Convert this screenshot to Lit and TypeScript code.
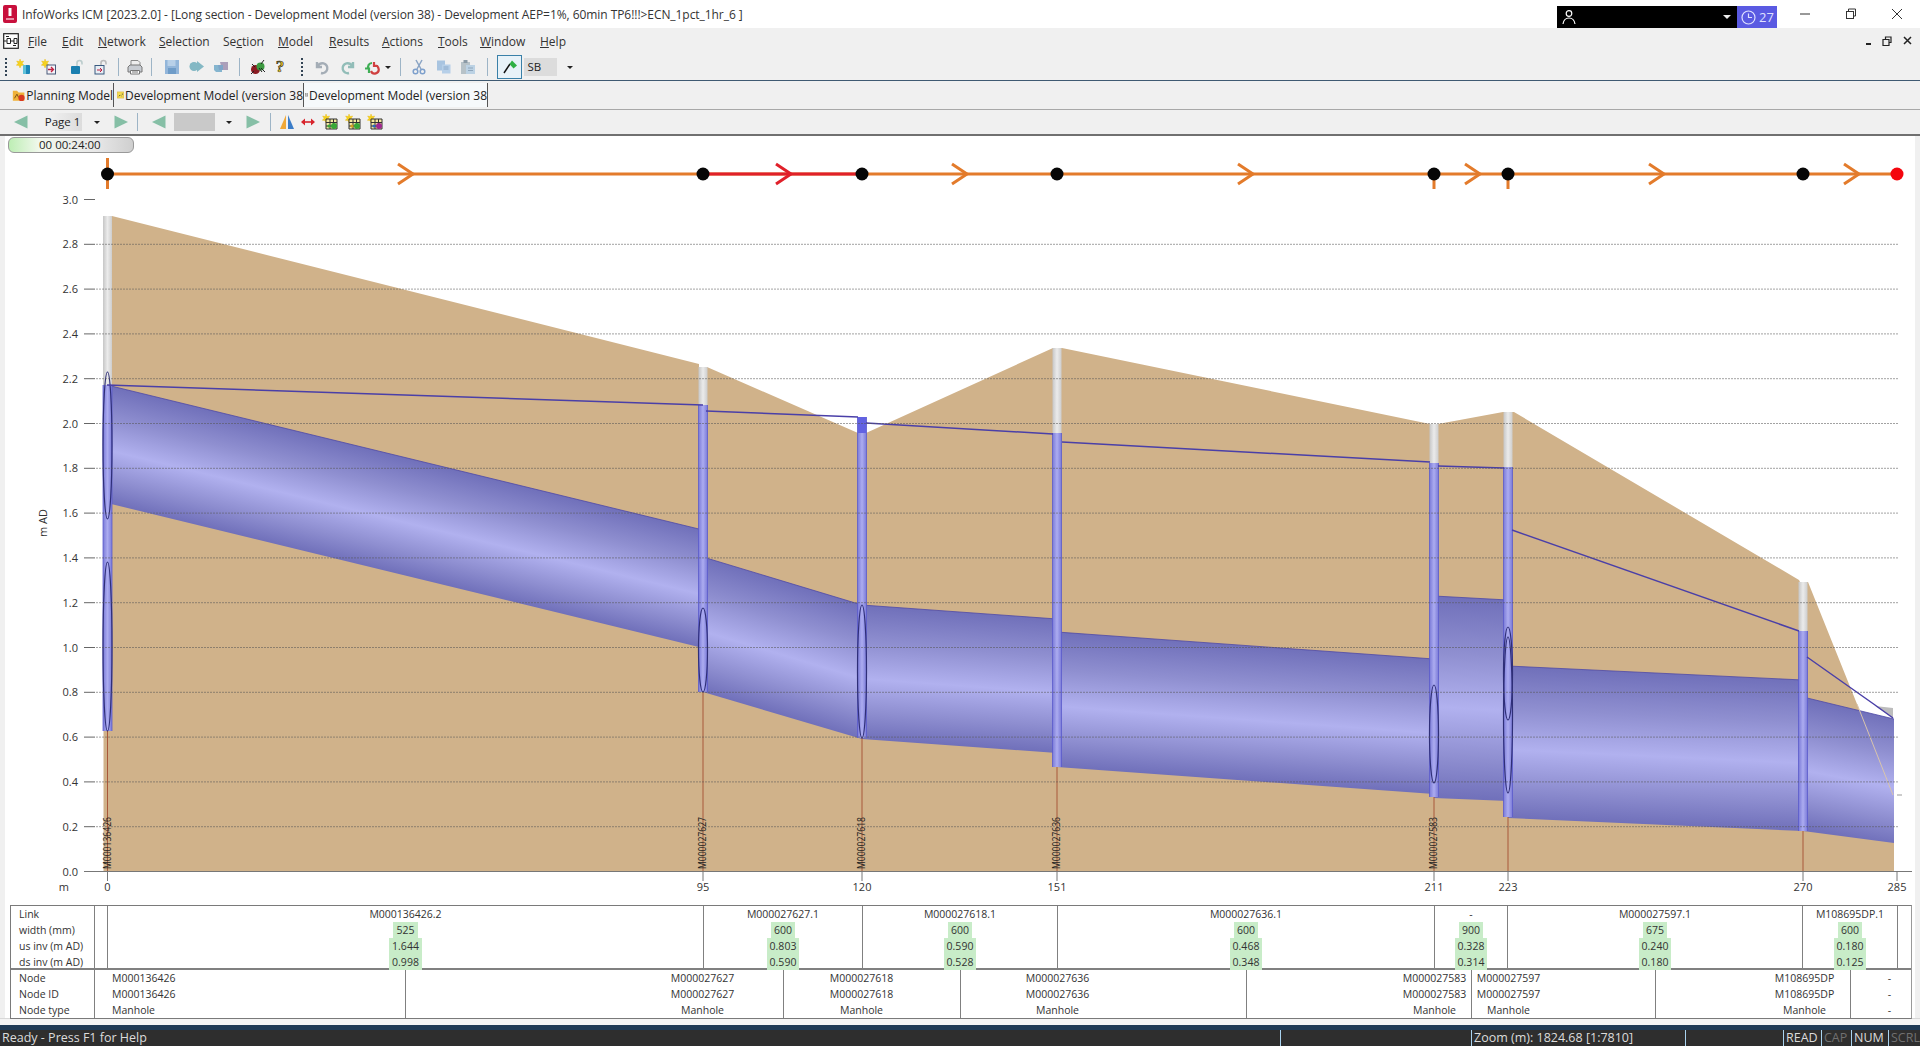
import { LitElement, css, html, svg } from 'lit'
import { customElement } from 'lit/decorators.js'

const UI = `"Open Sans", "Noto Sans", sans-serif`
const Y = (v: number) => 871.5 - 224 * v

// long section data, in page pixels
const NODES = [
  { x: 107.5, km: '0', ground: 216, water: 385, bottom: 731, label: 'M000136426' },
  { x: 703, km: '95', ground: 367, water: 405, bottom: 692, label: 'M000027627' },
  { x: 862, km: '120', ground: 433, water: 417, bottom: 738, label: 'M000027618' },
  { x: 1057, km: '151', ground: 348, water: 433, bottom: 767, label: 'M000027636' },
  { x: 1434, km: '211', ground: 424, water: 463, bottom: 797, label: 'M000027583' },
  { x: 1508, km: '223', ground: 412, water: 467, bottom: 817, label: '' },
  { x: 1803, km: '270', ground: 582, water: 631, bottom: 831, label: '' },
]

const PIPES: number[][][] = [
  [[107, 385], [703, 530], [703, 648], [107, 503]],
  [[703, 557], [862, 605], [862, 739], [703, 692]],
  [[862, 605], [1057, 619], [1057, 753], [862, 739]],
  [[1057, 632], [1434, 659], [1434, 794], [1057, 767]],
  [[1434, 596], [1508, 600], [1508, 801], [1434, 798]],
  [[1508, 666], [1803, 680], [1803, 831], [1508, 818]],
  [[1803, 697], [1894, 719], [1894, 843], [1803, 831]],
]

const WATER = [
  '107,385 703,405',
  '706,411 858,417',
  '866,423 1053,434',
  '1062,442 1430,462',
  '1438,466 1504,468',
  '1512,530 1799,631',
  '1807,657 1875,705 1893,718',
]

const ELLIPSES = [
  [107.5, 372, 519], [107.5, 562, 731], [703, 608, 692], [862, 605, 738],
  [1434, 685, 783], [1508, 627, 720], [1508, 637, 793],
]

const ARROWS = [
  [413, '#e37b2b'], [791, '#e0202a'], [967, '#e37b2b'], [1253, '#e37b2b'],
  [1480, '#e37b2b'], [1664, '#e37b2b'], [1859, '#e37b2b'],
] as [number, string][]

const LINKS = [
  { w: 13 },
  { w: 596, name: 'M000136426.2', vals: ['525', '1.644', '0.998'] },
  { w: 159, name: 'M000027627.1', vals: ['600', '0.803', '0.590'] },
  { w: 195, name: 'M000027618.1', vals: ['600', '0.590', '0.528'] },
  { w: 377, name: 'M000027636.1', vals: ['600', '0.468', '0.348'] },
  { w: 73, name: '-', vals: ['900', '0.328', '0.314'] },
  { w: 295, name: 'M000027597.1', vals: ['675', '0.240', '0.180'] },
  { w: 95, name: 'M108695DP.1', vals: ['600', '0.180', '0.125'] },
  { w: 15 },
]

const NODE_CELLS = [
  { from: 94, to: 405, c: 144, id: 'M000136426', type: 'Manhole', left: true },
  { from: 405, to: 783, c: 702, id: 'M000027627', type: 'Manhole' },
  { from: 783, to: 960, c: 861, id: 'M000027618', type: 'Manhole' },
  { from: 960, to: 1246, c: 1057, id: 'M000027636', type: 'Manhole' },
  { from: 1246, to: 1471, c: 1434, id: 'M000027583', type: 'Manhole' },
  { from: 1471, to: 1655, c: 1508, id: 'M000027597', type: 'Manhole' },
  { from: 1655, to: 1850, c: 1804, id: 'M108695DP', type: 'Manhole' },
  { from: 1850, to: 1912, c: 1889, id: '-', type: '-' },
]

const STATUS = [
  { w: 1280, t: 'Ready - Press F1 for Help' },
  { w: 191, t: '' },
  { w: 214, t: 'Zoom (m): 1824.68 [1:7810]' },
  { w: 98, t: '' },
  { w: 38, t: 'READ' },
  { w: 30, t: 'CAP', off: true },
  { w: 37, t: 'NUM' },
  { w: 32, t: 'SCRL', off: true },
]

const star = svg`<path d="M4 0l1 2.6 2.7-.6-1.5 2.3 1.8 2-2.7.1L4 9 3 6.400.3 6.300l1.800-2L.6 2l2.700.6z" fill="#f6d21e" stroke="#e8b810" stroke-width=".4"/>`
const ic = (body: unknown, size = 16) =>
  html`<svg width=${size} height=${size} viewBox="0 0 16 16">${body}</svg>`
const netIcon = () => ic(svg`<rect x=".7" y=".7" width="14.600" height="14.600" fill="#fff" stroke="#222" stroke-width="1.200"/><path d="M.7 8h3M4 5.500h3.500v5H4zM7.500 8H11M11 5.500h3v5h-3zM3 3.500h3M10 12.500h3" fill="none" stroke="#222" stroke-width="1"/>`)
const gridIcon = (c1: string, c2: string) => ic(svg`${star}<path d="M4 5h11v10H4z" fill="#f4e8a0" stroke="#333" stroke-width="1"/><path d="M4 8.500h11M4 12h11M8 5v10M11.500 5v10" stroke="#333" stroke-width="1"/><circle cx="12" cy="12" r="3" fill=${c1}/><circle cx="7" cy="12" r="1.600" fill=${c2}/>`)
const tri = (right: boolean) => ic(right
  ? svg`<path d="M1.500 1.500L15 8 1.500 14.500z" fill="#86bfa6"/>`
  : svg`<path d="M14.500 1.500L1 8l13.500 6.500z" fill="#86bfa6"/>`)
const drop = html`<span class="drop"></span>`
const sep = html`<span class="sep"></span>`
const grip = html`<span class="grip"></span>`

const MAIN_TOOLS: [number, unknown][] = [
  [4, grip],
  [21, ic(svg`${star}<rect x="7" y="6" width="7" height="9" rx="1" fill="#1c87b8"/><rect x="7" y="6" width="3" height="9" fill="#5fc0d8"/>`)],
  [50, ic(svg`${star}<rect x="6" y="6" width="8.500" height="9" fill="#f4f4f8" stroke="#4a5a7a"/><path d="M7 10.500h5M10 8l2.500 2.500L10 13" fill="none" stroke="#c02040" stroke-width="1.300"/>`)],
  [76, ic(svg`<path d="M9 7V4a2.500 2.500 0 0 1 5 0v1.500" fill="none" stroke="#bcc" stroke-width="1.600"/><rect x="3" y="7" width="9" height="8" rx="1" fill="#1a7fb0"/>`)],
  [103, ic(svg`<path d="M9 6V4a2.500 2.500 0 0 1 5 0v1.500" fill="none" stroke="#bbb" stroke-width="1.600"/><rect x="3" y="6.500" width="9" height="8.500" fill="#e8eef4" stroke="#3a5a80"/><path d="M5 11h5M8 9l2 2-2 2" stroke="#c02040" fill="none"/>`)],
  [118, sep],
  [135, ic(svg`<path d="M4 7V1.500h7l2 2V7" fill="#eee" stroke="#888"/><path d="M1 8l2-2h10l2 2v5H1z" fill="#c8ccd2" stroke="#777"/><path d="M3.500 11.500h9V15h-9z" fill="#fff" stroke="#777"/><path d="M5 13h6" stroke="#777"/>`)],
  [151, sep],
  [169, ic(svg`<rect x="1" y="1" width="14" height="14" fill="#93b6da"/><rect x="3.500" y="1" width="8" height="6" fill="#b8d0e8"/><rect x="4" y="9" width="8" height="6" fill="#6f9cc8"/>`)],
  [197, ic(svg`<path d="M1 5h7V2l7 5.500L8 13v-3H5l-4-1z" fill="#84b8c4"/><circle cx="5" cy="7.500" r="4.500" fill="#84b8c4"/>`)],
  [223, ic(svg`<path d="M1 6h8v7H3l-2-2z" fill="#85b5cf"/><path d="M7 3h8v8H9z" fill="#ab9fba"/><path d="M5 6h5v5H6z" fill="#7da5c8"/>`)],
  [239, sep],
  [255, ic(svg`<ellipse cx="5.500" cy="10.500" rx="4.500" ry="4.500" fill="#8a1a22"/><ellipse cx="10.500" cy="7.500" rx="4" ry="4" fill="#3c9a40"/><path d="M2 5l3 3M14 1l-3 4M1 15l3-3M15 13l-4-4" stroke="#222"/><path d="M9 9l3 4" stroke="#222"/>`)],
  [281, html`<span class="qm">?</span>`],
  [303, grip],
  [319, ic(svg`<path d="M3 3v5h5M3.500 8A5 5 0 1 1 7 14" fill="none" stroke="#a4adb6" stroke-width="2.400"/>`)],
  [348, ic(svg`<path d="M13 3v5H8M12.500 8A5 5 0 1 0 9 14" fill="none" stroke="#92bdb8" stroke-width="2.400"/>`)],
  [375, ic(svg`<path d="M10 3v4h4M10.500 6.500A4 4 0 1 1 7 12" fill="none" stroke="#d04040" stroke-width="2.200"/><path d="M5 14V9.500H1M4.500 9.800A4 4 0 0 1 8 4" fill="none" stroke="#3fae55" stroke-width="2.200"/>`)],
  [389, drop],
  [399, sep],
  [416, ic(svg`<path d="M5 1l5 9M11 1L6 10" stroke="#8aa4c4" stroke-width="1.500"/><circle cx="4.500" cy="12.500" r="2.300" fill="none" stroke="#7ea0cc" stroke-width="1.500"/><circle cx="11.500" cy="12.500" r="2.300" fill="none" stroke="#7ea0cc" stroke-width="1.500"/>`)],
  [444, ic(svg`<path d="M1 1.500h8v10H1z" fill="#a8c4e0"/><path d="M6 5.500h8.500v9H6z" fill="#b6cfe8"/><path d="M7.500 8h5M7.500 10h5" stroke="#8aa8c8"/>`)],
  [470, ic(svg`<path d="M1 3h9v12H1z" fill="#b7c2c8"/><path d="M3.500 1h4v3h-4z" fill="#8a9aa6"/><path d="M6 6h9v9H6z" fill="#bcd2e4"/><path d="M8 9h5M8 11.500h5" stroke="#8ea6bc"/>`)],
  [487, sep],
  [505, html`<span class="flag">${ic(svg`<path d="M2 14L8 5" stroke="#111" stroke-width="1.500"/><path d="M7.500 5L10 1.500l5 5-3.500 3z" fill="#2fb044"/>`)}</span>`],
  [542, html`<span class="box sb">SB</span>`],
  [572, drop],
]

const NAV_TOOLS: [number, unknown][] = [
  [20, tri(false)],
  [63.500, html`<span class="box page">Page 1</span>`],
  [100, drop],
  [123, tri(true)],
  [137, sep],
  [152, tri(false)],
  [196, html`<span class="box blank"></span>`],
  [233, drop],
  [255, tri(true)],
  [270, sep],
  [285, ic(svg`<path d="M1 15L7 1v14z" fill="#f0a838"/><path d="M9 1l6 14H9z" fill="#3a7cc8"/>`)],
  [308, ic(svg`<path d="M3 8h10" stroke="#d8242c" stroke-width="1.600"/><path d="M5 4.500L1 8l4 3.500zM11 4.500L15 8l-4 3.500z" fill="#d8242c"/>`)],
  [330, gridIcon('#38a838', '#38a838')],
  [353, gridIcon('#38a838', '#d0a020')],
  [376, gridIcon('#a02890', '#2868c0')],
]

const toolRow = (items: [number, unknown][]) => {
  const widths = items.map(([c], i) => {
    const prev = i ? items[i - 1][0] : 0
    const next = i < items.length - 1 ? items[i + 1][0] : c + 20
    return [i ? (c + prev) / 2 : 0, (c + next) / 2]
  })
  return items.map(([, node], i) =>
    html`<span class="slot" style="width:${widths[i][1] - widths[i][0]}px">${node}</span>`)
}

const cylinder = (pts: number[][], i: number) => {
  const [a, b, c, d] = pts
  const sx = (a[0] + b[0]) / 2
  const sy = (a[1] + b[1]) / 2
  const h = (d[1] + c[1]) / 2 - sy
  const dx = b[0] - a[0]
  const dy = (b[1] + c[1] - a[1] - d[1]) / 2
  const len = Math.hypot(dx, dy)
  const cos = dx / len
  const sin = dy / len
  return svg`
    <linearGradient id="pipe${i}" gradientUnits="userSpaceOnUse"
      x1=${sx} y1=${sy} x2=${sx - sin * h * cos} y2=${sy + cos * h * cos}>
      <stop offset="0" stop-color="#7070ba"/>
      <stop offset=".28" stop-color="#8f8fd0"/>
      <stop offset=".55" stop-color="#b1b1ef"/>
      <stop offset=".8" stop-color="#8e8ed0"/>
      <stop offset="1" stop-color="#7070ba"/>
    </linearGradient>
    <polygon points=${pts.map(p => p.join(',')).join(' ')} fill="url(#pipe${i})"/>
    <line x1=${a[0]} y1=${a[1]} x2=${b[0]} y2=${b[1]} stroke="#4f4aa8" stroke-width="1" opacity=".8"/>`
}

@customElement('app-root')
export class AppRoot extends LitElement {
  private chart() {
    const ticks = Array.from({ length: 16 }, (_, i) => i * 0.2)
    return html`<svg class="plot" viewBox="5 136 1910 769" width="1910" height="769">
      <defs>
        <linearGradient id="shaftTop"><stop offset="0" stop-color="#c6c6c6"/><stop offset=".5" stop-color="#ebebeb"/><stop offset="1" stop-color="#cdcdcd"/></linearGradient>
        <linearGradient id="shaftBlue"><stop offset="0" stop-color="#7a7ad8"/><stop offset=".5" stop-color="#acacf0"/><stop offset="1" stop-color="#7a7ad8"/></linearGradient>
      </defs>

      <polygon fill="#d0b28a" points="103.500,216 112,216 699,364 699,367 707,367 858,433 866,433 1053,348 1062,348 1430,424 1438,424 1503,412 1514,412 1799,580 1800,582 1808,582 1857,704 1894,796 1894,871 103.500,871"/>
      ${PIPES.map(cylinder)}
      <polygon fill="#bdbdbd" points="1857,704 1893,708 1893,718 1875,706"/>
      <line x1="1857" y1="704" x2="1893" y2="795" stroke="#d8c4ac" stroke-width="1"/>

      ${NODES.map(n => svg`<line x1=${n.x} y1=${n.bottom} x2=${n.x} y2="871" stroke="#a8583a"/>`)}
      ${NODES.map(n => n.ground < n.water ? svg`
        <rect x=${n.x - 4.5} y=${n.ground} width="9" height=${n.water - n.ground} fill="url(#shaftTop)"/>
        <rect x=${n.x - 4.5} y=${n.water} width="9" height=${n.bottom - n.water} fill="url(#shaftBlue)"/>` : svg`
        <rect x=${n.x - 4.5} y=${n.water} width="9" height=${n.ground - n.water} fill="#6262e2"/>
        <rect x=${n.x - 4.5} y=${n.ground} width="9" height=${n.bottom - n.ground} fill="url(#shaftBlue)"/>`)}
      ${NODES.map(n => svg`<line x1=${n.x - 4.5} y1=${n.water} x2=${n.x - 4.5} y2=${n.bottom} stroke="#5a5acb" stroke-width=".8"/>
        <line x1=${n.x + 4.5} y1=${n.water} x2=${n.x + 4.5} y2=${n.bottom} stroke="#5a5acb" stroke-width=".8"/>`)}
      ${ELLIPSES.map(([x, a, b]) => svg`<ellipse cx=${x} cy=${(a + b) / 2} rx="4.500" ry=${(b - a) / 2} fill="none" stroke="#2f2f78" stroke-width="1.200"/>`)}
      ${WATER.map(p => svg`<polyline points=${p} fill="none" stroke="#4a3fa8" stroke-width="1.500"/>`)}

      ${ticks.map(v => {
        const y = Y(v)
        const label = v.toFixed(1)
        return svg`
          ${v > 0.1 && v < 2.9 ? svg`<line x1="96" x2="1898" y1=${y} y2=${y} stroke="#555" stroke-opacity=".55" stroke-dasharray="2 1" />` : ''}
          <line x1="84" x2="95" y1=${y} y2=${y} stroke="#666"/>
          <text class="axis" x="78" y=${y + 4} text-anchor="end">${label}</text>`
      })}
      <line x1="84" x2="1912" y1="871.500" y2="871.500" stroke="#777"/>
      <text class="axis" transform="translate(47 523) rotate(-90)" text-anchor="middle">m AD</text>
      <text class="axis" x="69" y="891" text-anchor="end">m</text>

      ${[...NODES, { x: 1897, km: '285', label: '' }].map(n => svg`
        <line x1=${n.x} x2=${n.x} y1="871" y2="881" stroke="#777"/>
        <text class="axis" x=${n.x} y="891" text-anchor="middle">${n.km}</text>`)}
      ${NODES.filter(n => n.label).map(n => svg`
        <text class="vert" transform="translate(${n.x + 3} 869) rotate(-90)" textLength="52" lengthAdjust="spacingAndGlyphs">${n.label}</text>`)}
      <line x1="1897" x2="1902" y1="795" y2="795" stroke="#999"/>

      <line x1="107" x2="1897" y1="174" y2="174" stroke="#e37b2b" stroke-width="3"/>
      <line x1="703" x2="862" y1="174" y2="174" stroke="#e0202a" stroke-width="3"/>
      <line x1="107.500" x2="107.500" y1="158" y2="189" stroke="#e37b2b" stroke-width="3"/>
      ${[703, 1057 - 195, 1434, 1508].map(x => svg`<line x1=${x} x2=${x} y1="174" y2="189" stroke="#e37b2b" stroke-width="3" opacity=${x === 703 || x === 862 ? 0 : 1}/>`)}
      ${ARROWS.map(([x, c]) => svg`<polyline points="${x - 15},164 ${x},174 ${x - 15},184" fill="none" stroke=${c} stroke-width="3"/>`)}
      ${[107.500, 703, 862, 1057, 1434, 1508, 1803].map(x => svg`<circle cx=${x} cy="174" r="6.500" fill="#060606"/>`)}
      <circle cx="1897" cy="174" r="6.500" fill="#f4060e"/>
    </svg>`
  }

  private table() {
    return html`<div class="table">
      <div class="band links">
        <div class="heads"><div>Link</div><div>width (mm)</div><div>us inv (m AD)</div><div>ds inv (m AD)</div></div>
        ${LINKS.map(l => html`<div class="cell" style="width:${l.w}px">
          ${l.name ? html`<div>${l.name}</div>` : ''}
          ${(l.vals ?? []).map(v => html`<div><span class="hl">${v}</span></div>`)}
        </div>`)}
      </div>
      <div class="band nodes">
        <div class="heads"><div>Node</div><div>Node ID</div><div>Node type</div></div>
        ${NODE_CELLS.map(c => {
          const w = c.to - c.from
          const pad = 2 * (c.c - c.from) - w
          const style = `width:${w}px;${pad > 0 ? `padding-left:${pad}px` : `padding-right:${-pad}px`}`
          return html`<div class="cell ${c.left ? 'left' : ''}" style=${style}>
            <div>${c.id}</div><div>${c.id}</div><div>${c.type}</div>
          </div>`
        })}
      </div>
    </div>`
  }

  render() {
    return html`
      <div class="title">
        <svg class="logo" width="14" height="18" viewBox="0 0 14 18"><rect width="14" height="18" rx="2" fill="#c8103c"/><path d="M5.500 3h3v8h-3z" fill="#fff"/><path d="M3 14h8" stroke="#f4b8c8" stroke-width="1.500"/></svg>
        <span class="caption">InfoWorks ICM [2023.2.0] - [Long section - Development Model (version 38) - Development AEP=1%, 60min TP6!!!&gt;ECN_1pct_1hr_6 ]</span>
        <span class="acct">
          <svg width="16" height="16" viewBox="0 0 16 16" fill="none" stroke="#fff" stroke-width="1.200"><circle cx="8" cy="4.500" r="2.800"/><path d="M2 15c.6-4 3-6 6-6s5.400 2 6 6"/></svg>
          <span class="caret"></span>
        </span>
        <span class="badge">
          <svg width="15" height="15" viewBox="0 0 15 15" fill="none" stroke="#dfe0ff" stroke-width="1.200"><circle cx="7.500" cy="7.500" r="6.500"/><path d="M7.500 3.500v4h3.500"/></svg>
          27
        </span>
        <span class="win">
          <svg width="46" height="28" viewBox="0 0 46 28"><path d="M18 15h10" stroke="#333" stroke-width="1"/></svg>
          <svg width="46" height="28" viewBox="0 0 46 28" fill="none" stroke="#333"><rect x="18.500" y="12.500" width="7" height="7"/><path d="M20.500 12.500v-2.500h7v7h-2"/></svg>
          <svg width="46" height="28" viewBox="0 0 46 28"><path d="M18 10l10 10M28 10L18 20" stroke="#333" stroke-width="1"/></svg>
        </span>
      </div>
      <div class="menu">
        <span class="micon">${netIcon()}</span>
        <nav>
          <span><u>F</u>ile</span><span><u>E</u>dit</span><span><u>N</u>etwork</span><span><u>S</u>election</span><span>Se<u>c</u>tion</span><span><u>M</u>odel</span><span><u>R</u>esults</span><span><u>A</u>ctions</span><span><u>T</u>ools</span><span><u>W</u>indow</span><span><u>H</u>elp</span>
        </nav>
        <span class="mdi">
          <svg width="50" height="14" viewBox="0 0 50 14"><path d="M1 10h5" stroke="#222" stroke-width="2"/><path d="M18 5.500h6v6h-6zM20.500 5.500V3h5.500v5.500H24" fill="none" stroke="#222" stroke-width="1.200"/><path d="M39 3l7 7M46 3l-7 7" stroke="#222" stroke-width="1.500"/></svg>
        </span>
      </div>
      <div class="tools">${toolRow(MAIN_TOOLS)}</div>
      <div class="tabs">
        <span class="tab t1">${ic(svg`<path d="M1 3h5l2 2h7v10H1z" fill="#efb13a"/><path d="M3 12l3-5 2 4" stroke="#6a4010" fill="none"/><circle cx="11.500" cy="11.500" r="3.800" fill="#d83a22"/>`)}<span>Planning Model</span></span>
        <span class="tab t2">${ic(svg`<rect x=".5" y="1" width="15" height="14" fill="#f4dc50" stroke="#d8a830"/><path d="M4 11l3-3M9 9l1.500 2" stroke="#333" stroke-width="1.600"/><circle cx="12" cy="6" r="1.200" fill="#333"/>`)}<span>Development Model (version 38</span></span>
        <span class="tab t3">${netIcon()}<span>Development Model (version 38</span></span>
      </div>
      <div class="tools nav">${toolRow(NAV_TOOLS)}</div>
      <div class="sheet">
        <div class="clock">00 00:24:00</div>
        ${this.chart()}
        ${this.table()}
      </div>
      <div class="under"></div>
      <div class="stripe"></div>
      <div class="status">
        ${STATUS.map(s => html`<span class=${s.off ? 'off' : ''} style="width:${s.w}px">${s.t}</span>`)}
      </div>
    `
  }

  static styles = css`
    :host {
      display: block;
      width: 1920px;
      height: 1046px;
      overflow: hidden;
      background: #f0f0f0;
      font-family: ${css([UI] as unknown as TemplateStringsArray)};
      font-size: 12px;
      color: #222;
    }
    .title {
      height: 28px;
      display: flex;
      align-items: center;
      background: #fff;
    }
    .logo { margin: 0 5px 0 3px; }
    .caption { font-size: 12px; letter-spacing: -0.06px; color: #333; white-space: nowrap; flex: 1; }
    .acct {
      width: 180px;
      height: 22px;
      margin-top: 6px;
      background: #000;
      display: flex;
      align-items: center;
      justify-content: space-between;
      padding: 0 6px 0 4px;
      box-sizing: border-box;
    }
    .caret {
      border-left: 4px solid transparent;
      border-right: 4px solid transparent;
      border-top: 4px solid #eee;
    }
    .badge {
      width: 40px;
      height: 22px;
      margin-top: 6px;
      background: #5a5ae2;
      color: #dfe0ff;
      display: flex;
      align-items: center;
      gap: 3px;
      padding-left: 4px;
      box-sizing: border-box;
      font-size: 13px;
    }
    .win { display: flex; width: 143px; padding-left: 5px; box-sizing: border-box; margin-top: -2px; }
    .menu {
      height: 26px;
      display: flex;
      align-items: center;
    }
    .micon { width: 28px; padding-left: 3px; box-sizing: border-box; display: flex; }
    .menu nav {
      display: grid;
      grid-template-columns: 34px 36px 61px 64px 55px 51px 53px 56px 42px 60px 40px;
      flex: 1;
      color: #333;
    }
    .mdi { margin-right: 5px; display: flex; }
    .tools {
      height: 27px;
      display: flex;
      align-items: center;
      border-bottom: 1px solid #3f5a72;
      box-sizing: border-box;
    }
    .tools.nav { height: 26px; border-bottom: 2px solid #707070; }
    .slot { display: flex; justify-content: center; align-items: center; flex: none; }
    .sep { width: 1px; height: 18px; background: #9db4c6; }
    .grip { width: 2px; height: 18px; background: repeating-linear-gradient(#345 0 2px, transparent 2px 4px); }
    .drop {
      border-left: 3px solid transparent;
      border-right: 3px solid transparent;
      border-top: 3px solid #222;
    }
    .qm { font: 700 17px "Liberation Serif", serif; color: #e8c020; -webkit-text-stroke: 0.6px #222; }
    .flag {
      width: 25px;
      height: 24px;
      border: 1px solid #3a80a8;
      background: #e8f2f8;
      display: flex;
      align-items: center;
      justify-content: center;
      box-sizing: border-box;
    }
    .box { display: block; height: 18px; line-height: 18px; font-size: 11.500px; padding-left: 4px; box-sizing: border-box; }
    .sb { width: 40px; background: #dcdcdc; }
    .page { width: 55px; background: linear-gradient(90deg, #f0f0f0 20%, #dcdcdc); padding-left: 3px; }
    .blank { width: 54px; background: #c9c9c9; }
    .tabs {
      height: 29px;
      display: flex;
      align-items: center;
      border-bottom: 1px solid #a8a8a8;
      box-sizing: border-box;
      padding-left: 12px;
    }
    .tab {
      display: flex;
      align-items: center;
      height: 24px;
      overflow: hidden;
      white-space: nowrap;
      border-right: 1px solid #555;
      box-sizing: border-box;
      font-size: 12px;
    }
    .tab > span { margin-left: 1px; }
    .t1 { width: 102px; }
    .t2 { width: 190px; padding-left: 3px; }
    .t3 { width: 184px; padding-left: 1px; background: #f6f9fb; }
    .sheet {
      position: relative;
      margin: 0 5px;
      width: 1910px;
      background: #fff;
      height: 882px;
    }
    .plot { display: block; }
    .axis { font-size: 11px; fill: #333; }
    .vert { font-size: 10px; fill: #222; }
    .clock {
      position: absolute;
      left: 3px;
      top: 1px;
      width: 126px;
      height: 16px;
      box-sizing: border-box;
      border: 1px solid #999;
      border-radius: 6px;
      background: linear-gradient(90deg, #bdeeb4, #f2f8ee 25%, #e8e8e8 70%, #cfcfcf);
      line-height: 13px;
      padding-left: 30px;
      font-size: 11.500px;
    }
    .table {
      margin-left: 5px;
      width: 1902px;
      border: 1px solid #7a7a7a;
      border-right-color: #9a9a9a;
      box-sizing: border-box;
      font-size: 10.500px;
      line-height: 16px;
      color: #333;
    }
    .band { display: flex; }
    .links { height: 64px; border-bottom: 2px solid #808080; box-sizing: border-box; }
    .nodes { height: 48px; }
    .heads { width: 83px; padding-left: 8px; box-sizing: border-box; flex: none; }
    .cell {
      flex: none;
      box-sizing: border-box;
      border-left: 1px solid #808080;
      text-align: center;
      white-space: nowrap;
    }
    .links .cell:first-of-type { border-left-width: 1px; }
    .cell.left { text-align: left; padding-left: 17px !important; padding-right: 0 !important; }
    .hl { display: inline-block; background: #c8ecc8; padding: 0 3px; }
    .under { height: 7px; border-top: 1px solid #d8d8d8; background: #f4f4f4; box-sizing: border-box; }
    .stripe { height: 5px; background: #1f3a55; }
    .status {
      height: 16px;
      background: #2e2e2e;
      color: #dcdcdc;
      display: flex;
      font-size: 12.500px;
      line-height: 16px;
      white-space: nowrap;
    }
    .status span { flex: none; box-sizing: border-box; border-left: 1px solid #a9d3ef; padding-left: 2px; overflow: hidden; }
    .status span:first-child { border-left: 0; }
    .status .off { color: #707070; }
  `
}

declare global {
  interface HTMLElementTagNameMap {
    'app-root': AppRoot
  }
}
